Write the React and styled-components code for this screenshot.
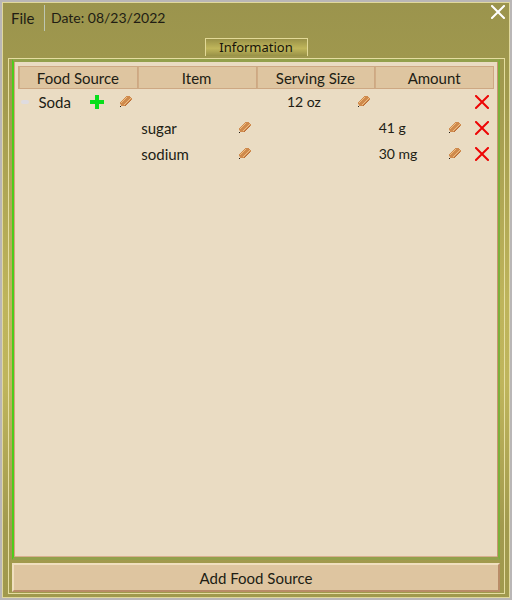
import React from "react";
import styled, { createGlobalStyle } from "styled-components";

const GlobalStyle = createGlobalStyle`
  * { box-sizing: border-box; }
  body { margin: 0; font: 15px/20px Lato, "Open Sans", sans-serif; color: #211d14; }
  button { font: inherit; color: inherit; }
`;

const Window = styled.main`
  display: flex;
  flex-direction: column;
  min-height: 100vh;
  padding: 0 5px 4px;
  border: 2px solid #b9b6b6;
  box-shadow: inset 0 0 0 1px #e0d89c;
  background: linear-gradient(#9b944d, #a29a4e 16%, #beb45b 50%, #bfb55c 64%, #a29a4e 88%, #a0994d);
`;

const TopBar = styled.header`
  display: flex;
  align-items: center;
  height: 36px;
  padding-bottom: 4px;
`;

const MenuButton = styled.button`
  width: 37px;
  height: 26px;
  padding: 0 0 0 4px;
  border: 0;
  background: none;
  text-align: left;
`;

const DateLabel = styled.time`
  padding: 3px 6px;
  border-left: 1px solid #bec6b2;
  font-size: 14px;
`;

const IconButton = styled.button`
  display: flex;
  flex: none;
  padding: 0;
  border: 0;
  background: none;
  margin-left: ${(p) => (p.$end ? "auto" : 0)};
  margin-right: ${(p) => p.$space || 0}px;
  align-self: ${(p) => (p.$top ? "flex-start" : "center")};
  padding-top: ${(p) => (p.$top ? 3 : 0)}px;
`;

const TabList = styled.div`
  display: flex;
  justify-content: center;
  height: 20px;
`;

const Tab = styled.button`
  width: 103px;
  height: 18px;
  padding: 0;
  border: 1px solid #e2d997;
  border-bottom: 0;
  background: linear-gradient(#999147, #c0b65b 55%, #989147);
  color: #16130a;
  font: 13px/15px "Noto Sans", sans-serif;
`;

const Panel = styled.section`
  display: flex;
  flex: 1;
  flex-direction: column;
  gap: 3px;
  padding: 0 4px 1px 3px;
  margin: 0 0 0 1px;
  border: 1px solid #e5dda0;
`;

const Tree = styled.div`
  flex: 1;
  padding: 4px;
  border: solid;
  border-width: 3px 2px;
  border-color: #93a04c #7cae3a #93a04c #4dcc1c;
  background: #eadcc3;
  box-shadow: inset 1px 0 #d99e7d, inset -1px 0 #c99572, inset 0 -1px #d7b08e;
`;

const Table = styled.table`
  width: 100%;
  table-layout: fixed;
  border-collapse: collapse;
`;

const HeadCell = styled.th`
  height: 22px;
  padding: 0;
  border: 1px solid #cda883;
  box-shadow: inset 1px 0 #d0ad86;
  background: #dec5a0;
  font-weight: 400;
`;

const Cell = styled.td`
  height: 26px;
  padding: 0 5px 0 ${(p) => p.$indent || 4}px;
`;

const CellContent = styled.div`
  display: flex;
  align-items: center;
  font-size: ${(p) => (p.$numeric ? 14 : 15)}px;
`;

const Expander = styled.span`
  width: 8px;
  height: 4px;
  margin-right: 10px;
  border-radius: 2px;
  background: #dfdce0;
`;

const AddButton = styled.button`
  height: 29px;
  padding: 0;
  border: 2px solid;
  border-color: #f0dfbf #b98c67 #b98c67 #f0dfbf;
  background: #dec5a0;
  line-height: 24px;
`;

const Pencil = () => (
  <svg width="12" height="11" viewBox="0 0 12 11" shapeRendering="crispEdges" aria-hidden="true">
    <path d="M1 5 6 0h3l3 3v1L5 10H1L0 9V7z" fill="#cf8a4d" />
    <path d="M1 6 6 1h1L1 7zM3 9 10 2h1L4 9z" fill="#edbd81" />
    <path d="M4 10 11 3v1l-6 6z" fill="#b96b36" />
    <path d="M0 8h1v1H0z" fill="#e5bb8c" />
    <path d="M0 10h1v1H0z" fill="#211b16" />
  </svg>
);

const Plus = () => (
  <svg width="14" height="14" viewBox="0 0 14 14" shapeRendering="crispEdges" aria-hidden="true">
    <path d="M5 0h4v5h5v4H9v5H5V9H0V5h5z" fill="#08df1b" />
  </svg>
);

const Cross = ({ color }) => (
  <svg width="14" height="14" viewBox="0 0 14 14" aria-hidden="true">
    <path d="M1 1 13 13M13 1 1 13" stroke={color} strokeWidth="2" strokeLinecap="square" />
  </svg>
);

const Edit = ({ label, space }) => (
  <IconButton $end $space={space} aria-label={`Edit ${label}`}><Pencil /></IconButton>
);

const Remove = ({ label }) => (
  <IconButton aria-label={`Remove ${label}`}><Cross color="#ed0505" /></IconButton>
);

const columns = ["Food Source", "Item", "Serving Size", "Amount"];
const items = [
  { name: "sugar", amount: "41 g" },
  { name: "sodium", amount: "30 mg" },
];

export default function App() {
  return (
    <>
      <GlobalStyle />
      <Window>
        <TopBar>
          <MenuButton>File</MenuButton>
          <DateLabel dateTime="2022-08-23">Date: 08/23/2022</DateLabel>
          <IconButton $end $top aria-label="Close"><Cross color="#fff" /></IconButton>
        </TopBar>
        <TabList role="tablist">
          <Tab role="tab" aria-selected="true">Information</Tab>
        </TabList>
        <Panel>
          <Tree>
            <Table>
              <thead>
                <tr>{columns.map((name) => <HeadCell key={name}>{name}</HeadCell>)}</tr>
              </thead>
              <tbody>
                <tr>
                  <Cell $indent={2}>
                    <CellContent>
                      <Expander />
                      Soda
                      <IconButton $end $space={16} aria-label="Add item"><Plus /></IconButton>
                      <IconButton aria-label="Edit Soda"><Pencil /></IconButton>
                    </CellContent>
                  </Cell>
                  <Cell />
                  <Cell $indent={31}>
                    <CellContent $numeric>12 oz<Edit label="serving size" /></CellContent>
                  </Cell>
                  <Cell>
                    <CellContent>
                      <IconButton $end aria-label="Remove Soda"><Cross color="#ed0505" /></IconButton>
                    </CellContent>
                  </Cell>
                </tr>
                {items.map(({ name, amount }) => (
                  <tr key={name}>
                    <Cell />
                    <Cell><CellContent>{name}<Edit label={name} /></CellContent></Cell>
                    <Cell />
                    <Cell>
                      <CellContent $numeric>
                        {amount}
                        <Edit label={`${name} amount`} space={14} />
                        <Remove label={name} />
                      </CellContent>
                    </Cell>
                  </tr>
                ))}
              </tbody>
            </Table>
          </Tree>
          <AddButton>Add Food Source</AddButton>
        </Panel>
      </Window>
    </>
  );
}
